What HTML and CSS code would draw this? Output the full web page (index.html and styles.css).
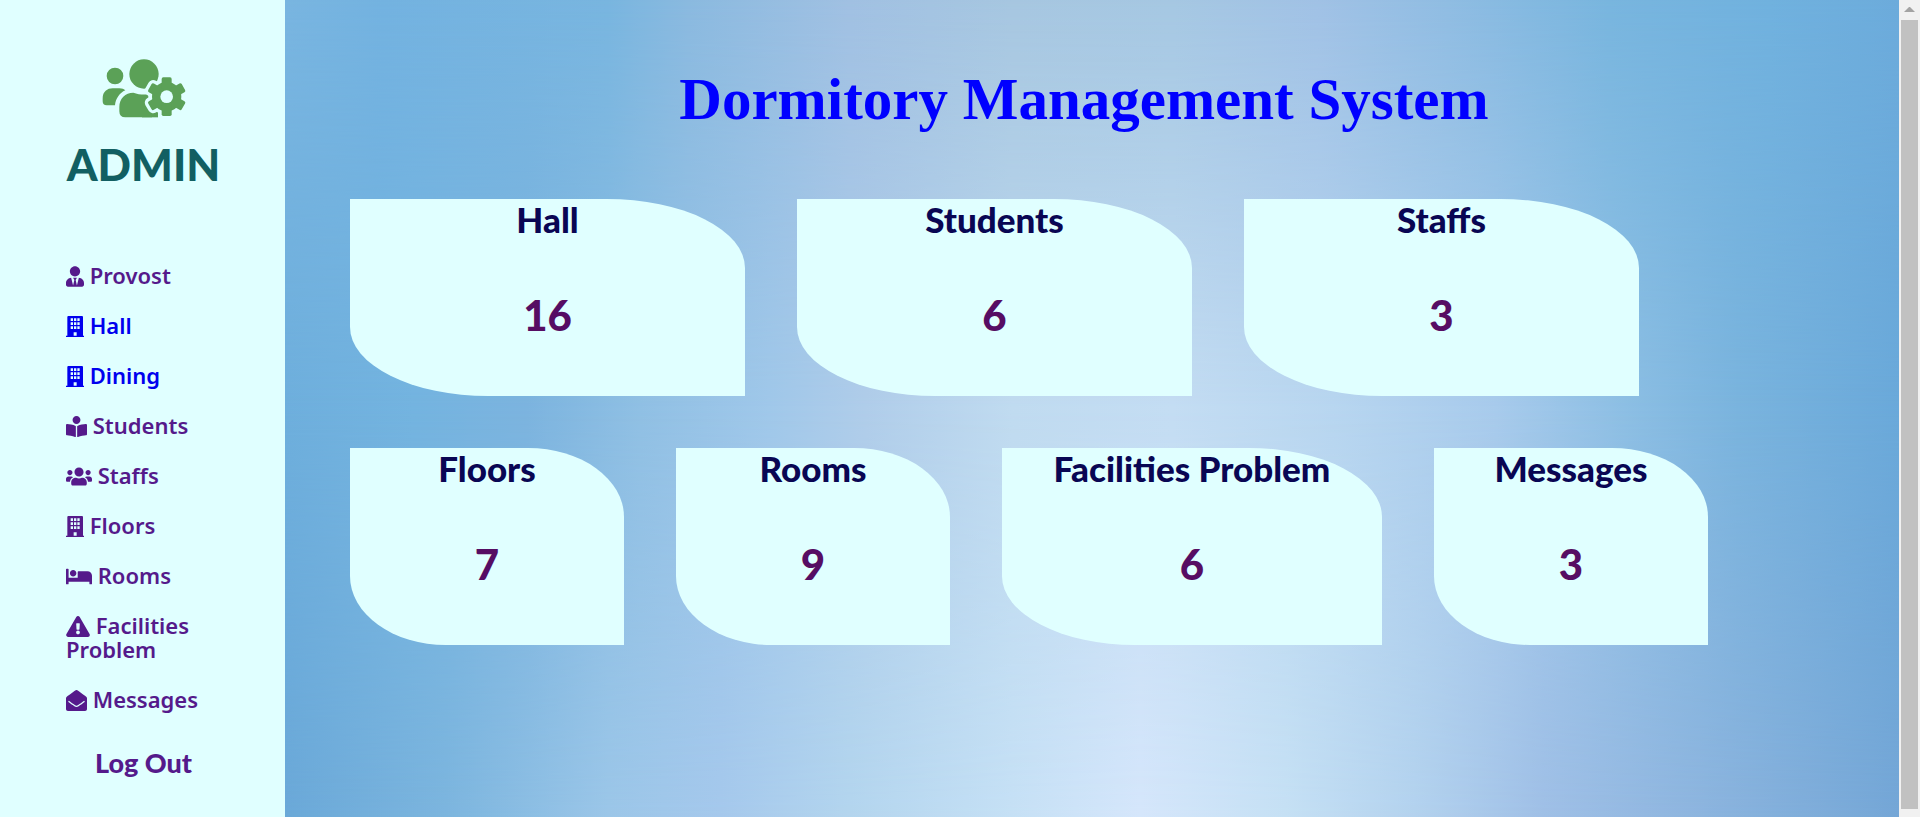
FILE: index.html
```html
<!DOCTYPE html>
<html lang="en">
<head>
<meta charset="utf-8">
<title>Dormitory Management System</title>
<link rel="stylesheet" href="styles.css">
</head>
<body>
<svg class="sprite" aria-hidden="true">
  <symbol id="building" viewBox="0 0 54 63"><path fill-rule="evenodd" d="M4 3q0-3 3-3h41q3 0 3 3v56h3v4H0v-4h4zM14 7v8h7V7zM24 7v8h7V7zM34 7v8h7V7zM14 19v8h7v-8zM24 19v8h7v-8zM34 19v8h7v-8zM14 31v8h7v-8zM24 31v8h7v-8zM34 31v8h7v-8zM23 49v10h9V49z"/></symbol>
</svg>
<div class="layout">
  <aside class="sidebar">
    <div class="brand">
      <svg class="brand-icon" viewBox="0 0 252 177" aria-hidden="true">
        <circle cx="39" cy="51" r="25"/>
        <path d="M32 88H52C60 88 66 90 70 94C53 102 41 118 39 139H14Q2 139 2 127V118C2 98 16 88 32 88Z"/>
        <circle cx="126" cy="45" r="44"/>
        <path d="M52 144C52 118 70 101 94 101C108 106 124 108 138 106L150 175H70Q52 175 52 157Z"/>
        <path d="M120 140H168V175H120Z"/>
        <g class="gear-gap">
          <circle cx="194" cy="113" r="44"/>
          <rect id="tooth" x="179" y="55" width="30" height="116" rx="6"/>
          <use href="#tooth" transform="rotate(60 194 113)"/>
          <use href="#tooth" transform="rotate(120 194 113)"/>
        </g>
        <g>
          <circle cx="194" cy="113" r="44"/>
          <rect id="cog" x="179" y="55" width="30" height="116" rx="5"/>
          <use href="#cog" transform="rotate(60 194 113)"/>
          <use href="#cog" transform="rotate(120 194 113)"/>
        </g>
        <circle class="gear-hole" cx="194" cy="113" r="19"/>
      </svg>
      <h2 class="brand-name">ADMIN</h2>
    </div>
    <nav class="menu">
      <a href="#provost"><svg class="w18" viewBox="0 0 448 512"><path d="M224 256c70.7 0 128-57.3 128-128S294.7 0 224 0 96 57.3 96 128s57.3 128 128 128zm95.8 32.6L272 480l-32-136 32-56h-96l32 56-32 136-47.8-191.4C56.9 292 0 350.3 0 422.4V464c0 26.5 21.5 48 48 48h352c26.5 0 48-21.5 48-48v-41.6c0-72.1-56.9-130.4-128.2-133.8z"/></svg> Provost</a>
      <a class="fresh" href="#hall"><svg class="w18"><use href="#building"/></svg> Hall</a>
      <a class="fresh" href="#dining"><svg class="w18"><use href="#building"/></svg> Dining</a>
      <a href="#students"><svg class="w21" viewBox="0 0 512 512"><path d="M352 96c0-53.02-42.98-96-96-96s-96 42.98-96 96 42.98 96 96 96 96-42.98 96-96zM233.59 241.1c-59.33-36.32-155.43-46.3-203.79-49.05C13.55 191.13 0 203.51 0 219.14v222.8c0 14.33 11.59 26.28 26.49 27.05 43.66 2.29 131.99 10.68 193.04 41.43 9.37 4.72 20.48-1.71 20.48-11.87V252.56c-.01-4.67-2.32-8.95-6.42-11.46zm248.61-49.05c-48.35 2.74-144.46 12.73-203.78 49.05-4.1 2.51-6.41 6.96-6.41 11.63v245.79c0 10.19 11.14 16.63 20.54 11.9 61.04-30.72 149.32-39.11 192.97-41.4 14.9-.78 26.49-12.73 26.49-27.06V219.14c-.01-15.63-13.56-28.01-29.81-27.09z"/></svg> Students</a>
      <a href="#staffs"><svg class="w26" viewBox="0 0 640 512"><path d="M96 224c35.3 0 64-28.7 64-64s-28.7-64-64-64-64 28.7-64 64 28.7 64 64 64zm448 0c35.3 0 64-28.7 64-64s-28.7-64-64-64-64 28.7-64 64 28.7 64 64 64zm32 32h-64c-17.6 0-33.5 7.1-45.1 18.6 40.3 22.1 68.9 62 75.1 109.4h66c17.7 0 32-14.3 32-32v-32c0-35.3-28.7-64-64-64zm-256 0c61.9 0 112-50.1 112-112S381.9 32 320 32 208 82.1 208 144s50.1 112 112 112zm76.8 32h-8.3c-20.8 10-43.9 16-68.5 16s-47.6-6-68.5-16h-8.3C179.6 288 128 339.6 128 403.2V432c0 26.5 21.5 48 48 48h288c26.5 0 48-21.5 48-48v-28.8c0-63.6-51.6-115.2-115.2-115.2zm-223.7-13.4C161.5 263.1 145.6 256 128 256H64c-35.3 0-64 28.7-64 64v32c0 17.7 14.3 32 32 32h65.9c6.3-47.4 34.9-87.3 75.2-109.4z"/></svg> Staffs</a>
      <a href="#floors"><svg class="w18"><use href="#building"/></svg> Floors</a>
      <a href="#rooms"><svg class="w26" viewBox="0 0 640 512"><path d="M176 256c44.11 0 80-35.89 80-80s-35.89-80-80-80-80 35.89-80 80 35.89 80 80 80zm352-128H304c-8.84 0-16 7.16-16 16v144H64V80c0-8.84-7.16-16-16-16H16C7.16 64 0 71.16 0 80v352c0 8.84 7.16 16 16 16h32c8.84 0 16-7.16 16-16v-48h512v48c0 8.84 7.16 16 16 16h32c8.84 0 16-7.16 16-16V240c0-61.86-50.14-112-112-112z"/></svg> Rooms</a>
      <a href="#facilities"><svg class="w24" viewBox="0 0 576 512"><path d="M569.517 440.013C587.975 472.007 564.806 512 527.94 512H48.054c-36.937 0-59.999-40.055-41.577-71.987L246.423 23.985c18.467-32.009 64.72-31.951 83.154 0l239.94 416.028zM288 354c-25.405 0-46 20.595-46 46s20.595 46 46 46 46-20.595 46-46-20.595-46-46-46zm-43.673-165.346l7.418 136c.347 6.364 5.609 11.346 11.982 11.346h48.546c6.373 0 11.635-4.982 11.982-11.346l7.418-136c.375-6.874-5.098-12.654-11.982-12.654h-63.383c-6.884 0-12.356 5.78-11.981 12.654z"/></svg> Facilities Problem</a>
      <a href="#messages"><svg class="w21" viewBox="0 0 512 512"><path d="M512 464c0 26.51-21.49 48-48 48H48c-26.51 0-48-21.49-48-48V200.724a48 48 0 0 1 18.387-37.776c24.913-19.529 45.501-35.365 164.2-121.511C199.412 29.17 232.797-.347 256 .003c23.198-.354 56.596 29.172 73.413 41.433 118.687 86.137 139.303 101.995 164.2 121.512A48 48 0 0 1 512 200.724V464zm-65.666-196.605c-2.563-3.728-7.7-4.595-11.339-1.907-22.845 16.873-55.462 40.705-105.582 77.079-16.825 12.266-50.21 41.781-73.413 41.43-23.211.344-56.559-29.143-73.413-41.43-50.114-36.37-82.734-60.204-105.582-77.079-3.639-2.688-8.776-1.821-11.339 1.907l-9.072 13.196a7.998 7.998 0 0 0 1.839 10.967c22.887 16.899 55.454 40.69 105.303 76.868 20.274 14.781 56.524 47.813 92.264 47.573 35.724.242 71.961-32.771 92.263-47.573 49.85-36.179 82.418-59.97 105.303-76.868a7.998 7.998 0 0 0 1.839-10.967l-9.071-13.196z"/></svg> Messages</a>
    </nav>
    <a class="logout" href="#logout">Log Out</a>
  </aside>
  <main class="main">
    <h1 class="title">Dormitory Management System</h1>
    <div class="row">
      <section class="card wide"><h3>Hall</h3><p>16</p></section>
      <section class="card wide"><h3>Students</h3><p>6</p></section>
      <section class="card wide"><h3>Staffs</h3><p>3</p></section>
    </div>
    <div class="row">
      <section class="card"><h3>Floors</h3><p>7</p></section>
      <section class="card"><h3>Rooms</h3><p>9</p></section>
      <section class="card medium"><h3>Facilities Problem</h3><p>6</p></section>
      <section class="card"><h3>Messages</h3><p>3</p></section>
    </div>
  </main>
  <div class="scrollbar" aria-hidden="true">
    <svg viewBox="0 0 21 20"><path d="M5 12h11l-5-5h-1z"/></svg>
    <div class="thumb"></div>
  </div>
</div>
</body>
</html>
```
FILE: styles.css
```css
* { box-sizing: border-box; }
body { margin: 0; }
.sprite { display: none; }

.layout {
  display: flex;
  min-height: 100vh;
}

.sidebar {
  flex: 0 0 285px;
  min-width: 0;
  padding: 59px 64px 0 66px;
  background: #e0ffff;
}
.brand {
  display: flex;
  flex-direction: column;
  align-items: center;
}
.brand-icon {
  width: 84px;
  height: 59px;
  fill: #5ba157;
}
.gear-gap {
  fill: #e0ffff;
  stroke: #e0ffff;
  stroke-width: 20px;
}
.gear-hole { fill: #e0ffff; }
.brand-name {
  margin: 16px 0 0;
  font: 900 44px/60px Lato, sans-serif;
  color: #125f62;
}

.menu {
  display: flex;
  flex-direction: column;
  gap: 26px;
  margin-top: 69px;
}
.menu a {
  font: 600 22px/24px "Noto Sans", sans-serif;
  color: #551a8b;
  text-decoration: none;
}
.menu a.fresh { color: #0000ee; }
.menu svg {
  height: 21px;
  vertical-align: -3px;
  fill: currentColor;
}
.w18 { width: 18px; }
.w21 { width: 21px; }
.w24 { width: 24px; }
.w26 { width: 26px; }
.logout {
  display: block;
  margin-top: 34px;
  font: 900 27px/36px Lato, sans-serif;
  color: #551a8b;
  text-align: center;
  text-decoration: none;
}

.main {
  position: relative;
  z-index: 0;
  flex: 1;
  padding: 64px 81px 64px 65px;
  background: linear-gradient(90deg, #6eafdd 0%, #74b4e0 8%, #7cb4df 15%, #90c0e4 22%, #a0c8ea 30%, #b0cdea 36%, #c0dbf0 45%, #c4ddf3 55%, #b8d6f0 65%, #a8cbec 75%, #8dbfe4 83%, #7ab4de 90%, #6aa9da 100%);
}
.main::before,
.main::after {
  content: "";
  position: absolute;
  inset: 0;
  z-index: -1;
}
.main::before {
  background: linear-gradient(90deg, #79b5e0 0%, #73b2e0 6%, #78b5df 20%, #8ab9df 25%, #a0c0e2 35%, #a6c6e0 45%, #a5c7e2 55%, #a0c1e5 64%, #8fbce2 72%, #78b5de 82%, #70b1de 92%, #6cabdb 100%);
  mask-image: linear-gradient(#000, transparent 50%);
}
.main::after {
  background: linear-gradient(90deg, #6aa8d8 0%, #7cb5de 10%, #9bc6e8 20%, #a5c8ec 27%, #b3d5ee 35%, #c5e0f5 45%, #d5e6fb 53%, #c5e0f4 62%, #b3d2ee 70%, #9fbfe6 78%, #8cb4de 88%, #74a6d6 100%);
  mask-image: linear-gradient(transparent 50%, #000);
}
.title {
  margin: 0 0 65px;
  font: bold 59px/70px "Liberation Serif", serif;
  color: #0000ff;
  text-align: center;
}
.row {
  display: flex;
  gap: 52px;
  margin-bottom: 52px;
}
.card {
  flex: 0 1 274px;
  height: 197px;
  background: #e0ffff;
  border-radius: 0 35%;
  text-align: center;
}
.card.medium { flex-basis: 380px; }
.card.wide { flex-basis: 395px; }
.card h3 {
  margin: 0;
  font: 900 35px/40px Lato, sans-serif;
  color: #090653;
}
.card p {
  margin: 50px 0 0;
  font: 900 42px/52px Lato, sans-serif;
  color: #560d63;
}

.scrollbar {
  display: flex;
  flex: 0 0 21px;
  flex-direction: column;
  padding-bottom: 8px;
  background: #f1f1f1;
}
.scrollbar svg {
  height: 20px;
  fill: #a3a3a3;
}
.thumb {
  flex: 1;
  margin: 0 2px;
  background: #c1c1c1;
}
```
